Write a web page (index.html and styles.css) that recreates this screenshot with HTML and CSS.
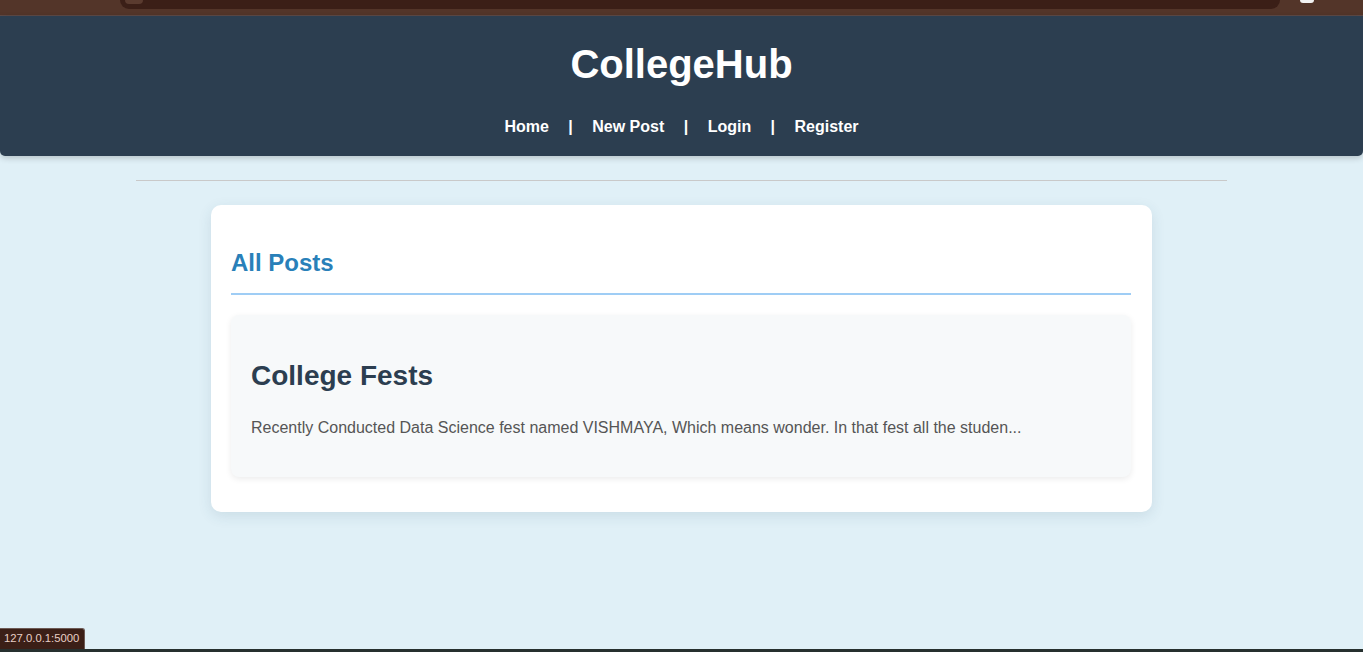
FILE: index.html
```html
<!DOCTYPE html>
<html lang="en">
<head>
<meta charset="utf-8">
<title>CollegeHub</title>
<link rel="stylesheet" href="styles.css">
</head>
<body>
<div class="chrome">
  <div class="chrome-bar"><span class="chrome-dot"></span></div>
  <span class="chrome-avatar"></span>
</div>
<header class="site-header">
  <h1 class="brand">CollegeHub</h1>
  <nav class="nav">
    <a href="#">Home</a> | <a href="#">New Post</a> | <a href="#">Login</a> | <a href="#">Register</a>
  </nav>
</header>
<hr class="divider">
<main class="container">
  <h2 class="section-title">All Posts</h2>
  <article class="post">
    <h3 class="post-title">College Fests</h3>
    <p class="post-excerpt">Recently Conducted Data Science fest named VISHMAYA, Which means wonder. In that fest all the studen...</p>
  </article>
</main>
<div class="status-tip">127.0.0.1:5000</div>
<div class="bottom-edge"></div>
</body>
</html>
```
FILE: styles.css
```css
* { box-sizing: border-box; }

html, body {
  margin: 0;
  padding: 0;
}

body {
  font-family: "Liberation Sans", Arial, sans-serif;
  background: #e0f0f7;
  min-height: 652px;
  overflow: hidden;
}

.chrome {
  height: 16px;
  background: #533529;
  border-bottom: 1px solid #5e4a47;
  display: flex;
  padding: 0 49px 0 120px;
  gap: 20px;
}

.chrome-bar {
  flex: 1;
  height: 9px;
  background: #3b1f17;
  border-radius: 0 0 12px 12px;
  padding-left: 5px;
}

.chrome-dot {
  display: block;
  width: 18px;
  height: 4px;
  border-radius: 0 0 9px 9px;
  background: #5a3b2f;
}

.chrome-avatar {
  width: 14px;
  height: 3px;
  background: #f2f2f2;
  border-radius: 0 0 7px 7px;
}

.site-header {
  background: #2c3e50;
  color: #fff;
  text-align: center;
  padding: 26px 0 20px;
  border-radius: 0 0 5px 5px;
  box-shadow: 0 2px 6px rgba(0, 0, 0, 0.2);
}

.brand {
  margin: 0 0 31px;
  font-size: 40px;
  font-weight: bold;
  line-height: normal;
}

.nav {
  font-size: 16px;
  font-weight: bold;
}

.nav a {
  color: #fff;
  text-decoration: none;
  margin: 0 15px;
}

.divider {
  width: 80%;
  height: 0;
  border: none;
  border-top: 1px solid #c9c9c9;
  margin: 24px auto 24px;
}

.container {
  max-width: 941px;
  margin: 0 auto;
  background: #fff;
  border-radius: 10px;
  padding: 44px 21px 20px 20px;
  box-shadow: 0 4px 14px rgba(40, 80, 110, 0.12);
}

.section-title {
  margin: 0 0 20px;
  font-size: 24px;
  line-height: 28px;
  color: #2980b9;
  padding-bottom: 16px;
  border-bottom: 2px solid #9fcdf5;
}

.post {
  background: #f7f9fa;
  border-radius: 8px;
  padding: 20px;
  margin-bottom: 15px;
  box-shadow: 0 2px 6px rgba(0, 0, 0, 0.08);
}

.post-title {
  margin: 25px 0 27px;
  font-size: 28px;
  color: #2c3e50;
}

.post-excerpt {
  margin: 0 0 20px;
  font-size: 16px;
  color: #555;
}

.status-tip {
  position: fixed;
  left: 0;
  bottom: 3px;
  height: 21px;
  padding: 3px 5px 0 4px;
  font-size: 11.3px;
  color: #e8cfc6;
  background: #3b1f17;
  border: 1px solid #6d5a55;
  border-left: none;
  border-bottom: none;
  border-radius: 0 3px 0 0;
}

.bottom-edge {
  position: fixed;
  left: 0;
  right: 0;
  bottom: 0;
  height: 3px;
  background: #26302f;
}
```
